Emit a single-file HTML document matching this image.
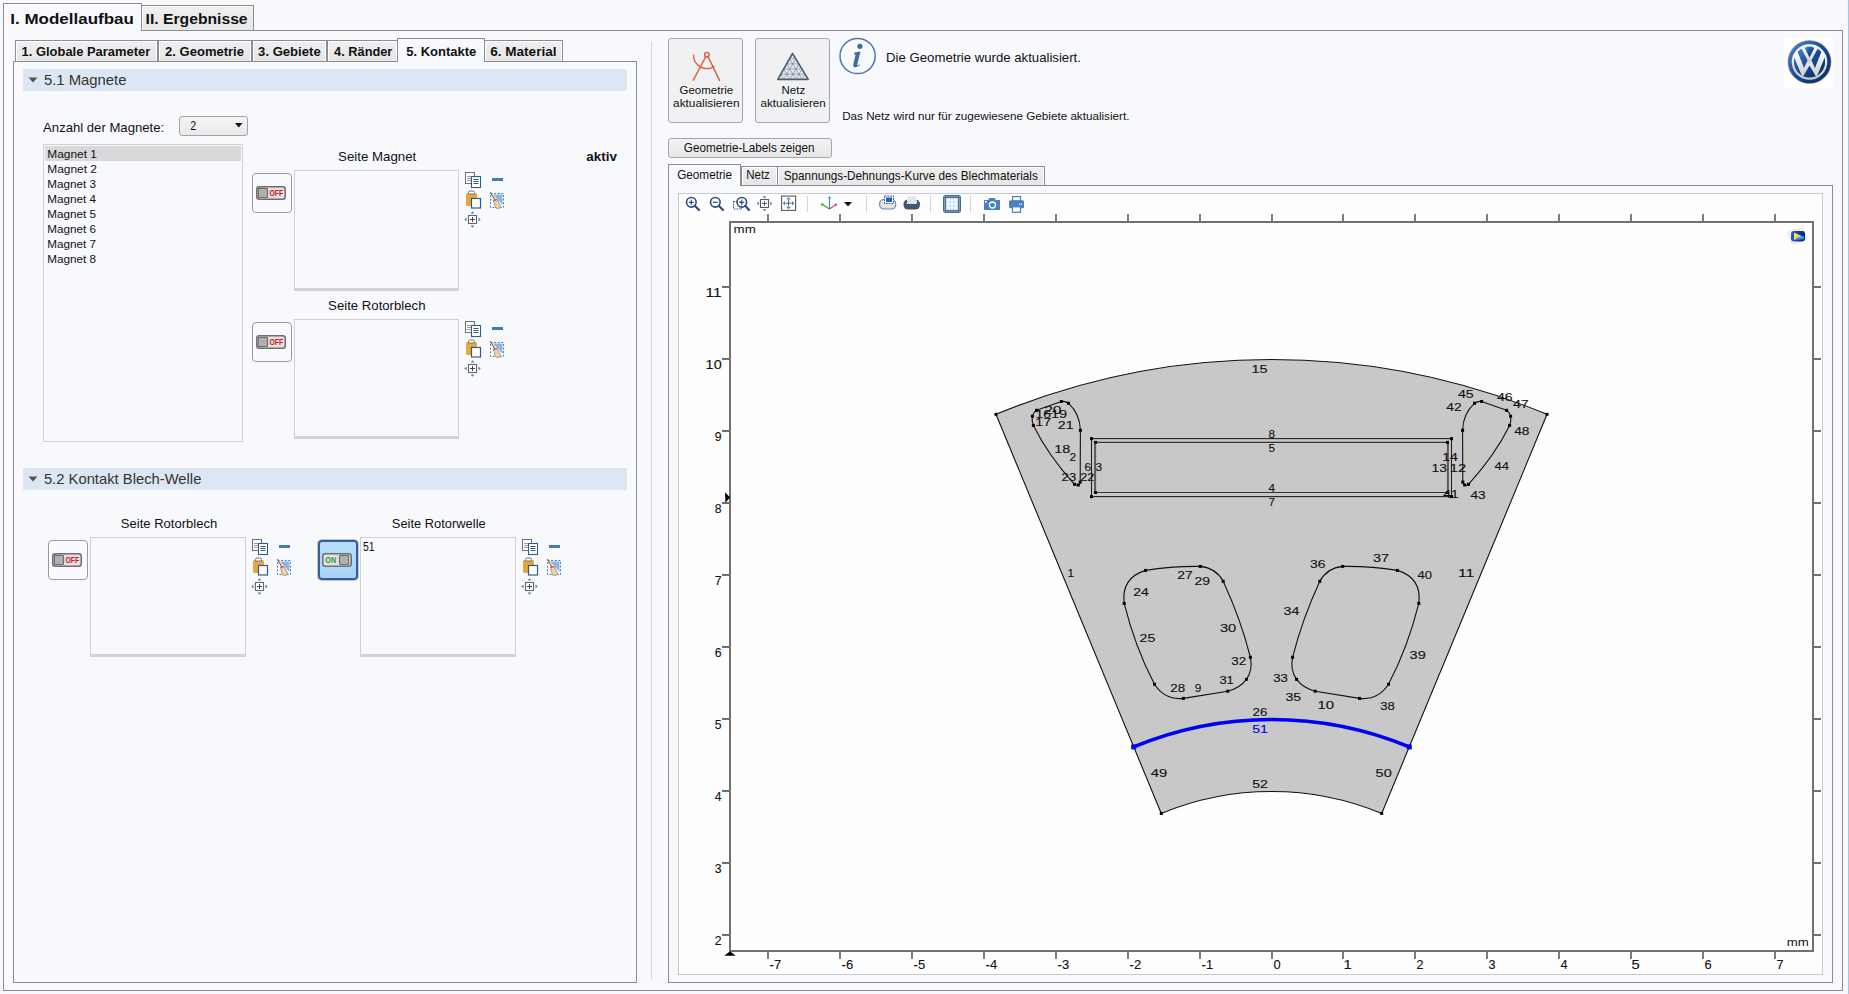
<!DOCTYPE html>
<html><head><meta charset="utf-8"><style>
html,body{margin:0;padding:0;}
body{width:1849px;height:994px;position:relative;overflow:hidden;background:#f8f9fd;font-family:"Liberation Sans",sans-serif;color:#111;}
body>div,body>svg{position:absolute;}
</style></head><body>
<div style="left:3px;top:30px;width:1840px;height:961px;border:1px solid #8b8d92;box-sizing:border-box;"></div><div style="left:1848px;top:0px;width:1px;height:994px;background:#9cc7f2;"></div><div style="left:141px;top:5px;width:113px;height:25px;border:1px solid #8b8d92;border-bottom:none;background:linear-gradient(#f0f0f1,#e7e7e8);box-shadow:inset 1px 1px 0 #fff;box-sizing:border-box;"></div><div style="left:3px;top:3px;width:139px;height:28px;border:1px solid #8b8d92;border-bottom:none;background:#f8f9fd;box-sizing:border-box;"></div><div style="left:13px;top:61px;width:624px;height:922px;border:1px solid #8b8d92;box-sizing:border-box;"></div><div style="left:15px;top:40px;width:143px;height:22px;border:1px solid #8b8d92;background:linear-gradient(#efeff0,#e6e6e7);box-shadow:inset 1px 1px 0 #fff,inset -1px 0 0 #fff;box-sizing:border-box;"></div><div style="left:158px;top:40px;width:94px;height:22px;border:1px solid #8b8d92;background:linear-gradient(#efeff0,#e6e6e7);box-shadow:inset 1px 1px 0 #fff,inset -1px 0 0 #fff;box-sizing:border-box;"></div><div style="left:252px;top:40px;width:75px;height:22px;border:1px solid #8b8d92;background:linear-gradient(#efeff0,#e6e6e7);box-shadow:inset 1px 1px 0 #fff,inset -1px 0 0 #fff;box-sizing:border-box;"></div><div style="left:327px;top:40px;width:71px;height:22px;border:1px solid #8b8d92;background:linear-gradient(#efeff0,#e6e6e7);box-shadow:inset 1px 1px 0 #fff,inset -1px 0 0 #fff;box-sizing:border-box;"></div><div style="left:484px;top:40px;width:79px;height:22px;border:1px solid #8b8d92;background:linear-gradient(#efeff0,#e6e6e7);box-shadow:inset 1px 1px 0 #fff,inset -1px 0 0 #fff;box-sizing:border-box;"></div><div style="left:397px;top:38px;width:88px;height:24px;border:1px solid #8b8d92;border-bottom:none;background:#f8f9fd;box-sizing:border-box;"></div><div style="left:651px;top:42px;width:1px;height:937px;background:#d6d7da;"></div><div style="left:23px;top:69px;width:604px;height:22px;background:#dde7f3;"></div><svg style="position:absolute;left:28px;top:77px;" width="10" height="6" viewBox="0 0 10 6"><path d="M0.5 0.5H9.5L5 5.5Z" fill="#555"/></svg><div style="left:23px;top:468px;width:604px;height:22px;background:#dde7f3;"></div><svg style="position:absolute;left:28px;top:476px;" width="10" height="6" viewBox="0 0 10 6"><path d="M0.5 0.5H9.5L5 5.5Z" fill="#555"/></svg><div style="left:179px;top:116px;width:69px;height:20px;border:1px solid #a3a3a3;border-radius:3px;background:linear-gradient(#f4f4f4,#e9e9ea);box-sizing:border-box;"></div><svg style="position:absolute;left:235px;top:123px;" width="8" height="5" viewBox="0 0 8 5"><path d="M0 0H7.5L3.75 4.5Z" fill="#111"/></svg><div style="left:43px;top:144px;width:200px;height:298px;border:1px solid #cfd0d2;box-sizing:border-box;"></div><div style="left:45px;top:146px;width:196px;height:15px;background:#d9d9db;"></div><div style="left:294px;top:170px;width:165px;height:121px;border:1px solid #cfd0d2;box-sizing:border-box;"></div><div style="left:294px;top:288px;width:165px;height:3px;background:#d3d3d5;"></div><div style="left:294px;top:319px;width:165px;height:120px;border:1px solid #cfd0d2;box-sizing:border-box;"></div><div style="left:294px;top:436px;width:165px;height:3px;background:#d3d3d5;"></div><div style="left:90px;top:537px;width:156px;height:120px;border:1px solid #cfd0d2;box-sizing:border-box;"></div><div style="left:90px;top:654px;width:156px;height:3px;background:#d3d3d5;"></div><div style="left:360px;top:537px;width:156px;height:120px;border:1px solid #cfd0d2;box-sizing:border-box;"></div><div style="left:360px;top:654px;width:156px;height:3px;background:#d3d3d5;"></div><div style="left:252px;top:173px;width:40px;height:40px;border:1px solid #9a9a9a;border-radius:4px;background:#f9fafe;box-sizing:border-box;"></div><svg style="position:absolute;left:256px;top:186px;" width="31" height="15" viewBox="0 0 31 15"><rect x="0.75" y="0.75" width="28.5" height="12.5" rx="2.5" fill="#e2e2e2" stroke="#6e6e6e" stroke-width="1.5"/><rect x="2.3" y="2.3" width="9.2" height="9.2" rx="1" fill="#b0b0b0" stroke="#6e6e6e" stroke-width="1.2"/><text x="13.4" y="10.3" font-size="8.5" font-weight="bold" fill="#d4161e" font-family="Liberation Sans" textLength="13.8" lengthAdjust="spacingAndGlyphs">OFF</text></svg><div style="left:252px;top:322px;width:40px;height:40px;border:1px solid #9a9a9a;border-radius:4px;background:#f9fafe;box-sizing:border-box;"></div><svg style="position:absolute;left:256px;top:335px;" width="31" height="15" viewBox="0 0 31 15"><rect x="0.75" y="0.75" width="28.5" height="12.5" rx="2.5" fill="#e2e2e2" stroke="#6e6e6e" stroke-width="1.5"/><rect x="2.3" y="2.3" width="9.2" height="9.2" rx="1" fill="#b0b0b0" stroke="#6e6e6e" stroke-width="1.2"/><text x="13.4" y="10.3" font-size="8.5" font-weight="bold" fill="#d4161e" font-family="Liberation Sans" textLength="13.8" lengthAdjust="spacingAndGlyphs">OFF</text></svg><div style="left:48px;top:540px;width:40px;height:40px;border:1px solid #9a9a9a;border-radius:4px;background:#f9fafe;box-sizing:border-box;"></div><svg style="position:absolute;left:52px;top:553px;" width="31" height="15" viewBox="0 0 31 15"><rect x="0.75" y="0.75" width="28.5" height="12.5" rx="2.5" fill="#e2e2e2" stroke="#6e6e6e" stroke-width="1.5"/><rect x="2.3" y="2.3" width="9.2" height="9.2" rx="1" fill="#b0b0b0" stroke="#6e6e6e" stroke-width="1.2"/><text x="13.4" y="10.3" font-size="8.5" font-weight="bold" fill="#d4161e" font-family="Liberation Sans" textLength="13.8" lengthAdjust="spacingAndGlyphs">OFF</text></svg><div style="left:318px;top:540px;width:40px;height:40px;border:2px solid #2d5ea6;border-radius:4px;background:linear-gradient(#b9defa,#a6d3f6);box-shadow:0 0 0 1px #c8c4c0;box-sizing:border-box;"></div><svg style="position:absolute;left:322px;top:553px;" width="31" height="15" viewBox="0 0 31 15"><rect x="0.75" y="0.75" width="28.5" height="12.5" rx="2.5" fill="#e2e2e2" stroke="#6e6e6e" stroke-width="1.5"/><rect x="17.5" y="2.3" width="9.2" height="9.2" rx="1" fill="#b0b0b0" stroke="#6e6e6e" stroke-width="1.2"/><text x="3.3" y="10.3" font-size="8.5" font-weight="bold" fill="#1a9a3a" font-family="Liberation Sans" textLength="10.8" lengthAdjust="spacingAndGlyphs">ON</text></svg><svg style="position:absolute;left:464px;top:172px;" width="44" height="56" viewBox="0 0 44 56"><rect x="1.5" y="0.5" width="9" height="11" fill="#fff" stroke="#707070"/><path d="M3 4.5H7M3 6.5H7M3 8.5H7" stroke="#a0a0a0"/><rect x="7.5" y="4.5" width="9" height="11" fill="#fff" stroke="#2f5a8e" stroke-width="1.1"/><path d="M9.5 7.5H14.5M9.5 9.5H14.5M9.5 11.5H14.5" stroke="#2f5a8e"/><rect x="28" y="6" width="11" height="3" fill="#4677b6"/><rect x="2" y="21" width="11" height="13" rx="1.5" fill="#e3a93c"/><path d="M4.5 22V20.5Q4.5 19 6 19H9Q10.5 19 10.5 20.5V22Z" fill="#fff" stroke="#6b6b6b" stroke-width="0.9"/><rect x="7.5" y="26.5" width="9" height="9.5" fill="#fff" stroke="#2f5a8e" stroke-width="1.2"/><rect x="26.5" y="21.5" width="13" height="14" fill="none" stroke="#4a80c0" stroke-dasharray="2,1.6"/><path d="M29 22.5L38.5 22.5L38.5 33Z" fill="#8db3de"/><path d="M26.3 20L31.5 29" stroke="#8b6a48" stroke-width="1.3"/><path d="M29.5 28.5L33 27.5L37 35.5Q34 37 31.5 36Z" fill="#ead3ae" stroke="#9a7850" stroke-width="0.7"/><path d="M29.5 28.5L33 27.5" stroke="#d04040" stroke-width="1"/><rect x="4.5" y="43.5" width="8" height="8" fill="#fff" stroke="#666" stroke-width="1.1"/><path d="M6 47.5H11M8.5 45V50" stroke="#444"/><path d="M8.5 39.2L6.6 41.4H10.4Z M8.5 55.8L6.6 53.6H10.4Z M0.3 47.5L2.5 45.6V49.4Z M16.7 47.5L14.5 45.6V49.4Z" fill="#4a80c0"/></svg><svg style="position:absolute;left:464px;top:321px;" width="44" height="56" viewBox="0 0 44 56"><rect x="1.5" y="0.5" width="9" height="11" fill="#fff" stroke="#707070"/><path d="M3 4.5H7M3 6.5H7M3 8.5H7" stroke="#a0a0a0"/><rect x="7.5" y="4.5" width="9" height="11" fill="#fff" stroke="#2f5a8e" stroke-width="1.1"/><path d="M9.5 7.5H14.5M9.5 9.5H14.5M9.5 11.5H14.5" stroke="#2f5a8e"/><rect x="28" y="6" width="11" height="3" fill="#4677b6"/><rect x="2" y="21" width="11" height="13" rx="1.5" fill="#e3a93c"/><path d="M4.5 22V20.5Q4.5 19 6 19H9Q10.5 19 10.5 20.5V22Z" fill="#fff" stroke="#6b6b6b" stroke-width="0.9"/><rect x="7.5" y="26.5" width="9" height="9.5" fill="#fff" stroke="#2f5a8e" stroke-width="1.2"/><rect x="26.5" y="21.5" width="13" height="14" fill="none" stroke="#4a80c0" stroke-dasharray="2,1.6"/><path d="M29 22.5L38.5 22.5L38.5 33Z" fill="#8db3de"/><path d="M26.3 20L31.5 29" stroke="#8b6a48" stroke-width="1.3"/><path d="M29.5 28.5L33 27.5L37 35.5Q34 37 31.5 36Z" fill="#ead3ae" stroke="#9a7850" stroke-width="0.7"/><path d="M29.5 28.5L33 27.5" stroke="#d04040" stroke-width="1"/><rect x="4.5" y="43.5" width="8" height="8" fill="#fff" stroke="#666" stroke-width="1.1"/><path d="M6 47.5H11M8.5 45V50" stroke="#444"/><path d="M8.5 39.2L6.6 41.4H10.4Z M8.5 55.8L6.6 53.6H10.4Z M0.3 47.5L2.5 45.6V49.4Z M16.7 47.5L14.5 45.6V49.4Z" fill="#4a80c0"/></svg><svg style="position:absolute;left:251px;top:539px;" width="44" height="56" viewBox="0 0 44 56"><rect x="1.5" y="0.5" width="9" height="11" fill="#fff" stroke="#707070"/><path d="M3 4.5H7M3 6.5H7M3 8.5H7" stroke="#a0a0a0"/><rect x="7.5" y="4.5" width="9" height="11" fill="#fff" stroke="#2f5a8e" stroke-width="1.1"/><path d="M9.5 7.5H14.5M9.5 9.5H14.5M9.5 11.5H14.5" stroke="#2f5a8e"/><rect x="28" y="6" width="11" height="3" fill="#4677b6"/><rect x="2" y="21" width="11" height="13" rx="1.5" fill="#e3a93c"/><path d="M4.5 22V20.5Q4.5 19 6 19H9Q10.5 19 10.5 20.5V22Z" fill="#fff" stroke="#6b6b6b" stroke-width="0.9"/><rect x="7.5" y="26.5" width="9" height="9.5" fill="#fff" stroke="#2f5a8e" stroke-width="1.2"/><rect x="26.5" y="21.5" width="13" height="14" fill="none" stroke="#4a80c0" stroke-dasharray="2,1.6"/><path d="M29 22.5L38.5 22.5L38.5 33Z" fill="#8db3de"/><path d="M26.3 20L31.5 29" stroke="#8b6a48" stroke-width="1.3"/><path d="M29.5 28.5L33 27.5L37 35.5Q34 37 31.5 36Z" fill="#ead3ae" stroke="#9a7850" stroke-width="0.7"/><path d="M29.5 28.5L33 27.5" stroke="#d04040" stroke-width="1"/><rect x="4.5" y="43.5" width="8" height="8" fill="#fff" stroke="#666" stroke-width="1.1"/><path d="M6 47.5H11M8.5 45V50" stroke="#444"/><path d="M8.5 39.2L6.6 41.4H10.4Z M8.5 55.8L6.6 53.6H10.4Z M0.3 47.5L2.5 45.6V49.4Z M16.7 47.5L14.5 45.6V49.4Z" fill="#4a80c0"/></svg><svg style="position:absolute;left:521px;top:539px;" width="44" height="56" viewBox="0 0 44 56"><rect x="1.5" y="0.5" width="9" height="11" fill="#fff" stroke="#707070"/><path d="M3 4.5H7M3 6.5H7M3 8.5H7" stroke="#a0a0a0"/><rect x="7.5" y="4.5" width="9" height="11" fill="#fff" stroke="#2f5a8e" stroke-width="1.1"/><path d="M9.5 7.5H14.5M9.5 9.5H14.5M9.5 11.5H14.5" stroke="#2f5a8e"/><rect x="28" y="6" width="11" height="3" fill="#4677b6"/><rect x="2" y="21" width="11" height="13" rx="1.5" fill="#e3a93c"/><path d="M4.5 22V20.5Q4.5 19 6 19H9Q10.5 19 10.5 20.5V22Z" fill="#fff" stroke="#6b6b6b" stroke-width="0.9"/><rect x="7.5" y="26.5" width="9" height="9.5" fill="#fff" stroke="#2f5a8e" stroke-width="1.2"/><rect x="26.5" y="21.5" width="13" height="14" fill="none" stroke="#4a80c0" stroke-dasharray="2,1.6"/><path d="M29 22.5L38.5 22.5L38.5 33Z" fill="#8db3de"/><path d="M26.3 20L31.5 29" stroke="#8b6a48" stroke-width="1.3"/><path d="M29.5 28.5L33 27.5L37 35.5Q34 37 31.5 36Z" fill="#ead3ae" stroke="#9a7850" stroke-width="0.7"/><path d="M29.5 28.5L33 27.5" stroke="#d04040" stroke-width="1"/><rect x="4.5" y="43.5" width="8" height="8" fill="#fff" stroke="#666" stroke-width="1.1"/><path d="M6 47.5H11M8.5 45V50" stroke="#444"/><path d="M8.5 39.2L6.6 41.4H10.4Z M8.5 55.8L6.6 53.6H10.4Z M0.3 47.5L2.5 45.6V49.4Z M16.7 47.5L14.5 45.6V49.4Z" fill="#4a80c0"/></svg><div style="left:668px;top:38px;width:75px;height:85px;border:1px solid #a6a6a8;border-radius:3px;background:#f0f1f3;box-sizing:border-box;"></div><div style="left:755px;top:38px;width:75px;height:85px;border:1px solid #a6a6a8;border-radius:3px;background:#f0f1f3;box-sizing:border-box;"></div><svg style="position:absolute;left:685px;top:45px;" width="40" height="40" viewBox="0 0 40 40"><g fill="none" stroke="#e05a36" stroke-width="1.4" stroke-linecap="round"><circle cx="21.9" cy="9.7" r="2.3"/><path d="M20.6 12L8.3 35.2M23.2 12L34.5 35.4"/><path d="M8.5 10.2A13.5 13.5 0 0 0 29 21.5"/></g></svg><svg style="position:absolute;left:772px;top:45px;" width="42" height="42" viewBox="0 0 42 42"><g stroke="#4b5b70" fill="none"><path d="M20.5 8.5L36.2 34.4H5.8Z" fill="#e6e8eb" stroke-width="1.6" stroke-linejoin="round"/><path d="M17.56 13.68H23.64" stroke-width="0.6" stroke="#6d7b8e"/><path d="M11.88 34.4L8.74 29.22" stroke-width="0.6" stroke="#6d7b8e"/><path d="M11.88 34.4L23.64 13.68" stroke-width="0.6" stroke="#6d7b8e"/><path d="M14.62 18.86H26.78" stroke-width="0.6" stroke="#6d7b8e"/><path d="M17.96 34.4L11.68 24.04" stroke-width="0.6" stroke="#6d7b8e"/><path d="M17.96 34.4L26.78 18.86" stroke-width="0.6" stroke="#6d7b8e"/><path d="M11.68 24.04H29.92" stroke-width="0.6" stroke="#6d7b8e"/><path d="M24.04 34.4L14.62 18.86" stroke-width="0.6" stroke="#6d7b8e"/><path d="M24.04 34.4L29.92 24.04" stroke-width="0.6" stroke="#6d7b8e"/><path d="M8.74 29.22H33.06" stroke-width="0.6" stroke="#6d7b8e"/><path d="M30.12 34.4L17.56 13.68" stroke-width="0.6" stroke="#6d7b8e"/><path d="M30.12 34.4L33.06 29.22" stroke-width="0.6" stroke="#6d7b8e"/></g></svg><svg style="position:absolute;left:834px;top:34px;" width="46" height="46" viewBox="0 0 46 46"><circle cx="23.6" cy="22" r="17.6" fill="none" stroke="#4d78ad" stroke-width="1.5"/><circle cx="25.9" cy="12.3" r="2.6" fill="#3f6aa3"/><path d="M20.5 18.6L26.5 17.6L23.2 30.5Q22.8 32 24.5 31L25.8 30.2L25.5 31.5Q22.5 33.6 20.2 33.2Q18.6 32.8 19.3 30.2L21.6 20.8L20.3 20.6Z" fill="#3f6aa3"/></svg><div style="left:668px;top:138px;width:164px;height:20px;border:1px solid #a6a6a8;border-radius:3px;background:linear-gradient(#f3f3f4,#e7e7e9);box-sizing:border-box;"></div><svg style="position:absolute;left:1784px;top:38px;" width="49" height="50" viewBox="0 0 49 50"><rect width="49" height="50" fill="#fff"/><defs><linearGradient id="vwb" x1="0" y1="0" x2="1" y2="1"><stop offset="0" stop-color="#4f8bd0"/><stop offset="0.5" stop-color="#174a94"/><stop offset="1" stop-color="#08275e"/></linearGradient><linearGradient id="vws" x1="0" y1="0" x2="0" y2="1"><stop offset="0" stop-color="#ffffff"/><stop offset="1" stop-color="#c9c9c9"/></linearGradient></defs><circle cx="25.5" cy="24" r="22" fill="#b8b0a8"/><circle cx="25.5" cy="24" r="21.3" fill="url(#vwb)"/><circle cx="25.5" cy="24" r="17.8" fill="url(#vws)"/><circle cx="25.5" cy="24" r="15.6" fill="url(#vwb)"/><path d="M9.5 17.5L13.5 13.5L20 30L25.5 18.5L31 30L37.5 13.5L41.5 17.5L32.5 39.5L25.5 27.5L18.5 39.5Z" fill="url(#vws)"/><path d="M16.5 9L21.5 7.2L25.5 15.5L29.5 7.2L34.5 9L25.5 26Z" fill="url(#vws)"/><path d="M20.5 9.6L30.5 9.6L25.5 19.6Z" fill="url(#vwb)"/></svg><div style="left:668px;top:185px;width:1165px;height:798px;border:1px solid #8b8d92;box-sizing:border-box;"></div><div style="left:741px;top:166px;width:37px;height:20px;border:1px solid #8b8d92;background:linear-gradient(#efeff0,#e6e6e7);box-shadow:inset 1px 1px 0 #fff,inset -1px 0 0 #fff;box-sizing:border-box;"></div><div style="left:777px;top:166px;width:268px;height:20px;border:1px solid #8b8d92;background:linear-gradient(#efeff0,#e6e6e7);box-shadow:inset 1px 1px 0 #fff,inset -1px 0 0 #fff;box-sizing:border-box;"></div><div style="left:668px;top:164px;width:73px;height:22px;border:1px solid #8b8d92;border-bottom:none;background:#f8f9fd;box-sizing:border-box;"></div><div style="left:678px;top:193px;width:1145px;height:782px;border:1px solid #c9cacd;background:#fefefe;box-sizing:border-box;"></div><svg style="position:absolute;left:685px;top:196px;" width="16" height="16" viewBox="0 0 16 16"><circle cx="6.3" cy="6.3" r="4.8" fill="none" stroke="#2b4f7e" stroke-width="1.6"/><path d="M9.8 9.8L14 14" stroke="#2b4f7e" stroke-width="2.3" stroke-linecap="round"/><path d="M3.8 6.3H8.8M6.3 3.8V8.8" stroke="#2b4f7e" stroke-width="1.2"/></svg><svg style="position:absolute;left:709px;top:196px;" width="16" height="16" viewBox="0 0 16 16"><circle cx="6.3" cy="6.3" r="4.8" fill="none" stroke="#2b4f7e" stroke-width="1.6"/><path d="M9.8 9.8L14 14" stroke="#2b4f7e" stroke-width="2.3" stroke-linecap="round"/><path d="M3.8 6.3H8.8" stroke="#2b4f7e" stroke-width="1.2"/></svg><svg style="position:absolute;left:732px;top:196px;" width="18" height="16" viewBox="0 0 18 16"><rect x="1.5" y="5.5" width="8" height="7.5" fill="none" stroke="#2b4f7e" stroke-dasharray="1.6,1.1"/><circle cx="9.8" cy="6.3" r="4.8" fill="#fff" fill-opacity="0.6" stroke="#2b4f7e" stroke-width="1.6"/><path d="M13.3 9.8L17 14" stroke="#2b4f7e" stroke-width="2.3" stroke-linecap="round"/><path d="M7.3 6.3H12.3M9.8 3.8V8.8" stroke="#2b4f7e" stroke-width="1.2"/></svg><svg style="position:absolute;left:756px;top:195px;" width="17" height="17" viewBox="0 0 17 17"><rect x="4.5" y="4.5" width="8" height="8" fill="#fff" stroke="#5a5a5a" stroke-width="1.1"/><path d="M6 8.5H11M8.5 6V11" stroke="#505050" stroke-width="0.9"/><path d="M8.5 0.6L6.6 2.8H10.4Z M8.5 16.4L6.6 14.2H10.4Z M0.6 8.5L2.8 6.6V10.4Z M16.4 8.5L14.2 6.6V10.4Z" fill="#4a80c0"/></svg><svg style="position:absolute;left:781px;top:195px;" width="16" height="17" viewBox="0 0 16 17"><rect x="0.6" y="1.1" width="14" height="14.3" fill="#fff" stroke="#5a5a5a" stroke-width="1.1"/><path d="M4.5 8.2H10.7M7.6 5.2V11.2" stroke="#505050" stroke-width="0.9"/><path d="M7.6 2.2L5.3 4.6H9.9Z M7.6 14.2L5.3 11.8H9.9Z M1.8 8.2L4.2 5.9V10.5Z M13.4 8.2L11 5.9V10.5Z" fill="#4a80c0"/></svg><div style="left:807px;top:196px;width:1px;height:16px;background:#d4d4d4;"></div><svg style="position:absolute;left:820px;top:196px;" width="18" height="15" viewBox="0 0 18 15"><path d="M9.5 13V1.5" stroke="#4a80c0" stroke-width="1.1"/><path d="M9.5 0L7.8 2.6H11.2Z" fill="#4a80c0"/><path d="M9.5 13L2.5 8.5" stroke="#3aa03a" stroke-width="1.1"/><path d="M0.8 7L1.6 10.3L4 8Z" fill="#3aa03a"/><path d="M9.5 13L15.8 8.6" stroke="#e0305a" stroke-width="1.1"/><path d="M17.5 7.5L14.2 7.9L16 10.5Z" fill="#e0305a"/></svg><svg style="position:absolute;left:844px;top:202px;" width="8" height="5" viewBox="0 0 8 5"><path d="M0 0H8L4 4.5Z" fill="#111"/></svg><div style="left:866px;top:196px;width:1px;height:16px;background:#d4d4d4;"></div><svg style="position:absolute;left:879px;top:195px;" width="18" height="15" viewBox="0 0 18 15"><rect x="0.7" y="4.5" width="16" height="9.5" rx="4" fill="#e3e3e3" stroke="#6a85a8" stroke-width="1.1"/><rect x="5.5" y="1" width="9" height="7.5" fill="#fff" stroke="#2b4f7e" stroke-dasharray="1.8,1"/><rect x="7" y="2.5" width="6" height="4.5" fill="#1f5fbf"/></svg><svg style="position:absolute;left:903px;top:195px;" width="18" height="15" viewBox="0 0 18 15"><rect x="0.5" y="4.5" width="16.5" height="10" rx="4.5" fill="#3f5878"/><rect x="4.5" y="1" width="9" height="7.5" fill="#e4e4e4" stroke="#fff" stroke-width="1.1" stroke-dasharray="1.8,1"/></svg><div style="left:930px;top:196px;width:1px;height:16px;background:#d4d4d4;"></div><svg style="position:absolute;left:943px;top:195px;" width="18" height="18" viewBox="0 0 18 18"><rect x="0.7" y="0.7" width="16.6" height="16.6" rx="2" fill="#bcd8f8" stroke="#3a6db0" stroke-width="1.4"/><rect x="2.3" y="2.3" width="13.4" height="13.4" fill="#c9e0fb" stroke="#555" stroke-width="1"/><g fill="#fff"><rect x="4.2" y="4.2" width="2.3" height="2.3"/><rect x="7.85" y="4.2" width="2.3" height="2.3"/><rect x="11.5" y="4.2" width="2.3" height="2.3"/><rect x="4.2" y="7.85" width="2.3" height="2.3"/><rect x="7.85" y="7.85" width="2.3" height="2.3"/><rect x="11.5" y="7.85" width="2.3" height="2.3"/><rect x="4.2" y="11.5" width="2.3" height="2.3"/><rect x="7.85" y="11.5" width="2.3" height="2.3"/><rect x="11.5" y="11.5" width="2.3" height="2.3"/></g></svg><div style="left:970px;top:196px;width:1px;height:16px;background:#d4d4d4;"></div><svg style="position:absolute;left:983px;top:197px;" width="18" height="14" viewBox="0 0 18 14"><path d="M1 3H5L6.5 1H11.5L13 3H17V13H1Z" fill="#4a80c0"/><circle cx="9.5" cy="8" r="3" fill="none" stroke="#fff" stroke-width="1.3"/><rect x="2" y="4" width="1.6" height="1.6" fill="#fff"/></svg><svg style="position:absolute;left:1009px;top:196px;" width="15" height="17" viewBox="0 0 15 17"><rect x="3.5" y="0.6" width="8" height="4.5" fill="#fff" stroke="#4a80c0" stroke-width="1.2"/><rect x="0" y="4.3" width="15" height="8" rx="1.5" fill="#4a80c0"/><rect x="3.5" y="10.8" width="8" height="5.5" fill="#fff" stroke="#4a80c0" stroke-width="1.2"/><rect x="10" y="7.6" width="1.2" height="1.2" fill="#fff"/><rect x="12" y="7.6" width="1.2" height="1.2" fill="#fff"/></svg><svg style="position:absolute;left:0;top:0" width="1849" height="994" viewBox="0 0 1849 994"><path d="M995.97 414.31 A720.00 720.00 0 0 1 1547.03 414.31 L1381.71 813.42 A288.00 288.00 0 0 0 1161.29 813.42 Z" fill="#c8c8c8" stroke="#111" stroke-width="1.1"/><rect x="1091.5" y="438.6" width="360" height="58" fill="none" stroke="#222" stroke-width="1.1"/><path d="M1095.1 442.4H1447.9M1095.1 492.5H1447.9" stroke="#333" stroke-width="1.1"/><path d="M1095.1 442.4V492.5M1447.9 442.4V492.5" stroke="#5a5a5a" stroke-width="2"/><path d="M1145.6 570.4 Q1172 566 1200.3 566.4 Q1216 568 1223.2 581.3 Q1241 620 1250.4 657.3 Q1253 670 1246.4 679.4 Q1240 688 1227.8 691.2 L1183.4 698.4 Q1165 700.5 1154.5 684.3 Q1135 647 1124.2 603.4 Q1121 578 1145.6 570.4 Z" fill="none" stroke="#111" stroke-width="1.1"/><path d="M1145.6 570.4 Q1172 566 1200.3 566.4 Q1216 568 1223.2 581.3 Q1241 620 1250.4 657.3 Q1253 670 1246.4 679.4 Q1240 688 1227.8 691.2 L1183.4 698.4 Q1165 700.5 1154.5 684.3 Q1135 647 1124.2 603.4 Q1121 578 1145.6 570.4 Z" fill="none" stroke="#111" stroke-width="1.1" transform="translate(2543.00,0) scale(-1,1)"/><path d="M1036.5 410.3 L1061.4 401.5 Q1065 400.8 1068.4 403.2 Q1080 414 1080.4 430.3 L1080.2 482.1 Q1079.8 484.8 1078.3 485 Q1076 485.8 1074.5 484.3 Q1048 455 1033.4 425.4 Q1031.5 420.5 1032.4 416.2 Q1033.5 412 1036.5 410.3 Z" fill="none" stroke="#111" stroke-width="1.1"/><path d="M1036.5 410.3 L1061.4 401.5 Q1065 400.8 1068.4 403.2 Q1080 414 1080.4 430.3 L1080.2 482.1 Q1079.8 484.8 1078.3 485 Q1076 485.8 1074.5 484.3 Q1048 455 1033.4 425.4 Q1031.5 420.5 1032.4 416.2 Q1033.5 412 1036.5 410.3 Z" fill="none" stroke="#111" stroke-width="1.1" transform="translate(2543.00,0) scale(-1,1)"/><path d="M1133.73 746.90 A360.00 360.00 0 0 1 1409.27 746.90" fill="none" stroke="#0000f2" stroke-width="3.6"/><rect x="1131.23" y="744.40" width="5" height="5" fill="#0000f2"/><rect x="1406.77" y="744.40" width="5" height="5" fill="#0000f2"/><rect x="1144.10" y="568.90" width="3" height="3" fill="#000"/><rect x="1395.90" y="568.90" width="3" height="3" fill="#000"/><rect x="1198.80" y="564.90" width="3" height="3" fill="#000"/><rect x="1341.20" y="564.90" width="3" height="3" fill="#000"/><rect x="1221.70" y="579.80" width="3" height="3" fill="#000"/><rect x="1318.30" y="579.80" width="3" height="3" fill="#000"/><rect x="1248.90" y="655.80" width="3" height="3" fill="#000"/><rect x="1291.10" y="655.80" width="3" height="3" fill="#000"/><rect x="1244.90" y="677.90" width="3" height="3" fill="#000"/><rect x="1295.10" y="677.90" width="3" height="3" fill="#000"/><rect x="1226.30" y="689.70" width="3" height="3" fill="#000"/><rect x="1313.70" y="689.70" width="3" height="3" fill="#000"/><rect x="1181.90" y="696.90" width="3" height="3" fill="#000"/><rect x="1358.10" y="696.90" width="3" height="3" fill="#000"/><rect x="1153.00" y="682.80" width="3" height="3" fill="#000"/><rect x="1387.00" y="682.80" width="3" height="3" fill="#000"/><rect x="1122.70" y="601.90" width="3" height="3" fill="#000"/><rect x="1417.30" y="601.90" width="3" height="3" fill="#000"/><rect x="1035.00" y="408.80" width="3" height="3" fill="#000"/><rect x="1505.00" y="408.80" width="3" height="3" fill="#000"/><rect x="1059.90" y="400.00" width="3" height="3" fill="#000"/><rect x="1480.10" y="400.00" width="3" height="3" fill="#000"/><rect x="1066.90" y="401.70" width="3" height="3" fill="#000"/><rect x="1473.10" y="401.70" width="3" height="3" fill="#000"/><rect x="1078.90" y="428.80" width="3" height="3" fill="#000"/><rect x="1461.10" y="428.80" width="3" height="3" fill="#000"/><rect x="1078.70" y="480.60" width="3" height="3" fill="#000"/><rect x="1461.30" y="480.60" width="3" height="3" fill="#000"/><rect x="1076.80" y="483.50" width="3" height="3" fill="#000"/><rect x="1463.20" y="483.50" width="3" height="3" fill="#000"/><rect x="1073.00" y="482.80" width="3" height="3" fill="#000"/><rect x="1467.00" y="482.80" width="3" height="3" fill="#000"/><rect x="1031.90" y="423.90" width="3" height="3" fill="#000"/><rect x="1508.10" y="423.90" width="3" height="3" fill="#000"/><rect x="1030.90" y="414.70" width="3" height="3" fill="#000"/><rect x="1509.10" y="414.70" width="3" height="3" fill="#000"/><rect x="1090.00" y="437.10" width="3" height="3" fill="#000"/><rect x="1450.00" y="437.10" width="3" height="3" fill="#000"/><rect x="1090.00" y="495.10" width="3" height="3" fill="#000"/><rect x="1450.00" y="495.10" width="3" height="3" fill="#000"/><rect x="1094.00" y="440.90" width="3" height="3" fill="#000"/><rect x="1446.00" y="440.90" width="3" height="3" fill="#000"/><rect x="1094.00" y="491.00" width="3" height="3" fill="#000"/><rect x="1446.00" y="491.00" width="3" height="3" fill="#000"/><rect x="994.47" y="412.81" width="3" height="3" fill="#000"/><rect x="1545.53" y="412.81" width="3" height="3" fill="#000"/><rect x="1159.79" y="811.92" width="3" height="3" fill="#000"/><rect x="1380.21" y="811.92" width="3" height="3" fill="#000"/><path d="M730 222 H1813 V951 H730 Z" fill="none" stroke="#707070" stroke-width="2"/><path d="M768 214V222M768 951V959M840 214V222M840 951V959M912 214V222M912 951V959M984 214V222M984 951V959M1056 214V222M1056 951V959M1128 214V222M1128 951V959M1200 214V222M1200 951V959M1272 214V222M1272 951V959M1343 214V222M1343 951V959M1415 214V222M1415 951V959M1487 214V222M1487 951V959M1559 214V222M1559 951V959M1631 214V222M1631 951V959M1703 214V222M1703 951V959M1775 214V222M1775 951V959M722 935H730M1813 935H1821M722 863H730M1813 863H1821M722 791H730M1813 791H1821M722 719H730M1813 719H1821M722 647H730M1813 647H1821M722 575H730M1813 575H1821M722 503H730M1813 503H1821M722 431H730M1813 431H1821M722 359H730M1813 359H1821M722 287H730M1813 287H1821" stroke="#707070" stroke-width="1.8"/><path d="M724.2 955.7H735.7L730 951.2Z" fill="#000"/><path d="M725.1 492.2L730.1 497.4L725.4 502.8Z" fill="#000"/></svg><svg style="position:absolute;left:1786px;top:226px;" width="24" height="20" viewBox="0 0 24 20"><path d="M2 6L17 1.5L21 13L6 18Z" fill="#f3f3f3" stroke="#dedede" stroke-width="0.6"/><defs><linearGradient id="sg" x1="0" y1="0" x2="1" y2="0"><stop offset="0" stop-color="#2a5ad8"/><stop offset="1" stop-color="#0a1f8a"/></linearGradient></defs><rect x="5" y="5" width="14" height="10.5" rx="3" fill="url(#sg)"/><path d="M8 6.5L16 10.2L8 14Z" fill="#f5e840"/><path d="M11 11L18 10V13L9 14Z" fill="#4aa8f0" opacity="0.8"/></svg>
<svg style="position:absolute;left:0;top:0" width="1849" height="994" viewBox="0 0 1849 994"><text x="10.30" y="24.0" font-size="14.5" font-weight="bold" fill="#111" font-family="Liberation Sans" textLength="123.53" lengthAdjust="spacingAndGlyphs">I. Modellaufbau</text><text x="145.60" y="23.8" font-size="14.5" font-weight="bold" fill="#111" font-family="Liberation Sans" textLength="102.01" lengthAdjust="spacingAndGlyphs">II. Ergebnisse</text><text x="21.60" y="56.0" font-size="12.9" font-weight="bold" fill="#111" font-family="Liberation Sans" textLength="128.60" lengthAdjust="spacingAndGlyphs">1. Globale Parameter</text><text x="165.10" y="56.0" font-size="12.9" font-weight="bold" fill="#111" font-family="Liberation Sans" textLength="78.89" lengthAdjust="spacingAndGlyphs">2. Geometrie</text><text x="258.10" y="56.0" font-size="12.9" font-weight="bold" fill="#111" font-family="Liberation Sans" textLength="62.59" lengthAdjust="spacingAndGlyphs">3. Gebiete</text><text x="334.10" y="56.0" font-size="12.9" font-weight="bold" fill="#111" font-family="Liberation Sans" textLength="58.23" lengthAdjust="spacingAndGlyphs">4. Ränder</text><text x="406.20" y="56.0" font-size="12.9" font-weight="bold" fill="#111" font-family="Liberation Sans" textLength="70.12" lengthAdjust="spacingAndGlyphs">5. Kontakte</text><text x="490.20" y="56.0" font-size="12.9" font-weight="bold" fill="#111" font-family="Liberation Sans" textLength="66.33" lengthAdjust="spacingAndGlyphs">6. Material</text><text x="43.90" y="85.0" font-size="14.8" font-weight="normal" fill="#333" font-family="Liberation Sans" textLength="82.63" lengthAdjust="spacingAndGlyphs">5.1 Magnete</text><text x="43.90" y="484.3" font-size="14.8" font-weight="normal" fill="#333" font-family="Liberation Sans" textLength="157.50" lengthAdjust="spacingAndGlyphs">5.2 Kontakt Blech-Welle</text><text x="43.10" y="131.5" font-size="11.9" font-weight="normal" fill="#111" font-family="Liberation Sans" textLength="121.00" lengthAdjust="spacingAndGlyphs">Anzahl der Magnete:</text><text x="190.30" y="129.6" font-size="11.9" font-weight="normal" fill="#111" font-family="Liberation Sans" textLength="6.03" lengthAdjust="spacingAndGlyphs">2</text><text x="47.20" y="157.6" font-size="11.7" font-weight="normal" fill="#111" font-family="Liberation Sans" textLength="49.80" lengthAdjust="spacingAndGlyphs">Magnet 1</text><text x="47.20" y="172.6" font-size="11.7" font-weight="normal" fill="#111" font-family="Liberation Sans" textLength="49.80" lengthAdjust="spacingAndGlyphs">Magnet 2</text><text x="47.20" y="187.6" font-size="11.7" font-weight="normal" fill="#111" font-family="Liberation Sans" textLength="48.80" lengthAdjust="spacingAndGlyphs">Magnet 3</text><text x="47.20" y="202.6" font-size="11.7" font-weight="normal" fill="#111" font-family="Liberation Sans" textLength="48.80" lengthAdjust="spacingAndGlyphs">Magnet 4</text><text x="47.20" y="217.6" font-size="11.7" font-weight="normal" fill="#111" font-family="Liberation Sans" textLength="48.80" lengthAdjust="spacingAndGlyphs">Magnet 5</text><text x="47.20" y="232.6" font-size="11.7" font-weight="normal" fill="#111" font-family="Liberation Sans" textLength="48.80" lengthAdjust="spacingAndGlyphs">Magnet 6</text><text x="47.20" y="247.6" font-size="11.7" font-weight="normal" fill="#111" font-family="Liberation Sans" textLength="48.82" lengthAdjust="spacingAndGlyphs">Magnet 7</text><text x="47.20" y="262.6" font-size="11.7" font-weight="normal" fill="#111" font-family="Liberation Sans" textLength="48.80" lengthAdjust="spacingAndGlyphs">Magnet 8</text><text x="338.10" y="161.0" font-size="11.9" font-weight="normal" fill="#111" font-family="Liberation Sans" textLength="78.21" lengthAdjust="spacingAndGlyphs">Seite Magnet</text><text x="586.30" y="161.0" font-size="11.9" font-weight="bold" fill="#111" font-family="Liberation Sans" textLength="30.65" lengthAdjust="spacingAndGlyphs">aktiv</text><text x="328.10" y="309.9" font-size="11.9" font-weight="normal" fill="#111" font-family="Liberation Sans" textLength="97.42" lengthAdjust="spacingAndGlyphs">Seite Rotorblech</text><text x="120.80" y="528.1" font-size="11.9" font-weight="normal" fill="#111" font-family="Liberation Sans" textLength="96.40" lengthAdjust="spacingAndGlyphs">Seite Rotorblech</text><text x="391.80" y="528.1" font-size="11.9" font-weight="normal" fill="#111" font-family="Liberation Sans" textLength="93.90" lengthAdjust="spacingAndGlyphs">Seite Rotorwelle</text><text x="363.00" y="551.4" font-size="11.9" font-weight="normal" fill="#111" font-family="Liberation Sans" textLength="11.56" lengthAdjust="spacingAndGlyphs">51</text><text x="679.50" y="94.0" font-size="10.3" font-weight="normal" fill="#111" font-family="Liberation Sans" textLength="53.69" lengthAdjust="spacingAndGlyphs">Geometrie</text><text x="673.10" y="106.8" font-size="10.3" font-weight="normal" fill="#111" font-family="Liberation Sans" textLength="66.41" lengthAdjust="spacingAndGlyphs">aktualisieren</text><text x="781.50" y="94.0" font-size="10.3" font-weight="normal" fill="#111" font-family="Liberation Sans" textLength="23.79" lengthAdjust="spacingAndGlyphs">Netz</text><text x="760.50" y="106.8" font-size="10.3" font-weight="normal" fill="#111" font-family="Liberation Sans" textLength="65.30" lengthAdjust="spacingAndGlyphs">aktualisieren</text><text x="886.10" y="61.9" font-size="12.2" font-weight="normal" fill="#111" font-family="Liberation Sans" textLength="194.82" lengthAdjust="spacingAndGlyphs">Die Geometrie wurde aktualisiert.</text><text x="842.20" y="119.6" font-size="11.5" font-weight="normal" fill="#111" font-family="Liberation Sans" textLength="287.20" lengthAdjust="spacingAndGlyphs">Das Netz wird nur für zugewiesene Gebiete aktualisiert.</text><text x="683.80" y="151.7" font-size="11.9" font-weight="normal" fill="#111" font-family="Liberation Sans" textLength="130.70" lengthAdjust="spacingAndGlyphs">Geometrie-Labels zeigen</text><text x="677.20" y="179.3" font-size="11.9" font-weight="normal" fill="#111" font-family="Liberation Sans" textLength="54.80" lengthAdjust="spacingAndGlyphs">Geometrie</text><text x="746.20" y="179.3" font-size="11.9" font-weight="normal" fill="#111" font-family="Liberation Sans" textLength="23.66" lengthAdjust="spacingAndGlyphs">Netz</text><text x="783.70" y="179.6" font-size="11.9" font-weight="normal" fill="#111" font-family="Liberation Sans" textLength="254.10" lengthAdjust="spacingAndGlyphs">Spannungs-Dehnungs-Kurve des Blechmaterials</text><text x="769.60" y="968.9" font-size="12.2" font-weight="normal" fill="#111" stroke="#111" stroke-width="0.12" font-family="Liberation Sans" textLength="11.56" lengthAdjust="spacingAndGlyphs">-7</text><text x="841.60" y="968.9" font-size="12.2" font-weight="normal" fill="#111" stroke="#111" stroke-width="0.12" font-family="Liberation Sans" textLength="11.56" lengthAdjust="spacingAndGlyphs">-6</text><text x="913.60" y="968.9" font-size="12.2" font-weight="normal" fill="#111" stroke="#111" stroke-width="0.12" font-family="Liberation Sans" textLength="11.56" lengthAdjust="spacingAndGlyphs">-5</text><text x="985.60" y="968.9" font-size="12.2" font-weight="normal" fill="#111" stroke="#111" stroke-width="0.12" font-family="Liberation Sans" textLength="11.56" lengthAdjust="spacingAndGlyphs">-4</text><text x="1057.60" y="968.9" font-size="12.2" font-weight="normal" fill="#111" stroke="#111" stroke-width="0.12" font-family="Liberation Sans" textLength="11.56" lengthAdjust="spacingAndGlyphs">-3</text><text x="1129.60" y="968.9" font-size="12.2" font-weight="normal" fill="#111" stroke="#111" stroke-width="0.12" font-family="Liberation Sans" textLength="11.56" lengthAdjust="spacingAndGlyphs">-2</text><text x="1201.60" y="968.9" font-size="12.2" font-weight="normal" fill="#111" stroke="#111" stroke-width="0.12" font-family="Liberation Sans" textLength="11.56" lengthAdjust="spacingAndGlyphs">-1</text><text x="1273.60" y="968.9" font-size="12.2" font-weight="normal" fill="#111" stroke="#111" stroke-width="0.12" font-family="Liberation Sans" textLength="7.15" lengthAdjust="spacingAndGlyphs">0</text><text x="1343.60" y="968.9" font-size="12.2" font-weight="normal" fill="#111" stroke="#111" stroke-width="0.12" font-family="Liberation Sans" textLength="8.17" lengthAdjust="spacingAndGlyphs">1</text><text x="1416.60" y="968.9" font-size="12.2" font-weight="normal" fill="#111" stroke="#111" stroke-width="0.12" font-family="Liberation Sans" textLength="7.00" lengthAdjust="spacingAndGlyphs">2</text><text x="1488.60" y="968.9" font-size="12.2" font-weight="normal" fill="#111" stroke="#111" stroke-width="0.12" font-family="Liberation Sans" textLength="7.00" lengthAdjust="spacingAndGlyphs">3</text><text x="1560.60" y="968.9" font-size="12.2" font-weight="normal" fill="#111" stroke="#111" stroke-width="0.12" font-family="Liberation Sans" textLength="7.15" lengthAdjust="spacingAndGlyphs">4</text><text x="1631.60" y="968.9" font-size="12.2" font-weight="normal" fill="#111" stroke="#111" stroke-width="0.12" font-family="Liberation Sans" textLength="8.17" lengthAdjust="spacingAndGlyphs">5</text><text x="1704.60" y="968.9" font-size="12.2" font-weight="normal" fill="#111" stroke="#111" stroke-width="0.12" font-family="Liberation Sans" textLength="7.15" lengthAdjust="spacingAndGlyphs">6</text><text x="1776.60" y="968.9" font-size="12.2" font-weight="normal" fill="#111" stroke="#111" stroke-width="0.12" font-family="Liberation Sans" textLength="7.00" lengthAdjust="spacingAndGlyphs">7</text><text x="721.6" y="945.4" font-size="12.2" fill="#111" stroke="#111" stroke-width="0.12" font-family="Liberation Sans" text-anchor="end">2</text><text x="721.6" y="873.4" font-size="12.2" fill="#111" stroke="#111" stroke-width="0.12" font-family="Liberation Sans" text-anchor="end">3</text><text x="721.6" y="801.4" font-size="12.2" fill="#111" stroke="#111" stroke-width="0.12" font-family="Liberation Sans" text-anchor="end">4</text><text x="721.6" y="729.4" font-size="12.2" fill="#111" stroke="#111" stroke-width="0.12" font-family="Liberation Sans" text-anchor="end">5</text><text x="721.6" y="657.4" font-size="12.2" fill="#111" stroke="#111" stroke-width="0.12" font-family="Liberation Sans" text-anchor="end">6</text><text x="721.6" y="585.4" font-size="12.2" fill="#111" stroke="#111" stroke-width="0.12" font-family="Liberation Sans" text-anchor="end">7</text><text x="721.6" y="513.4" font-size="12.2" fill="#111" stroke="#111" stroke-width="0.12" font-family="Liberation Sans" text-anchor="end">8</text><text x="721.6" y="441.4" font-size="12.2" fill="#111" stroke="#111" stroke-width="0.12" font-family="Liberation Sans" text-anchor="end">9</text><text x="705.60" y="369.4" font-size="12.2" font-weight="normal" fill="#111" stroke="#111" stroke-width="0.12" font-family="Liberation Sans" textLength="16.08" lengthAdjust="spacingAndGlyphs">10</text><text x="705.60" y="297.4" font-size="12.2" font-weight="normal" fill="#111" stroke="#111" stroke-width="0.12" font-family="Liberation Sans" textLength="16.00" lengthAdjust="spacingAndGlyphs">11</text><text x="733.60" y="233.0" font-size="11.2" font-weight="normal" fill="#111" font-family="Liberation Sans" textLength="22.17" lengthAdjust="spacingAndGlyphs">mm</text><text x="1786.80" y="945.7" font-size="11.2" font-weight="normal" fill="#111" font-family="Liberation Sans" textLength="22.05" lengthAdjust="spacingAndGlyphs">mm</text><text x="1251.50" y="372.9" font-size="11.8" font-weight="normal" fill="#111" stroke="#111" stroke-width="0.12" font-family="Liberation Sans" textLength="16.13" lengthAdjust="spacingAndGlyphs">15</text><text x="1457.90" y="397.6" font-size="11.8" font-weight="normal" fill="#111" stroke="#111" stroke-width="0.12" font-family="Liberation Sans" textLength="15.76" lengthAdjust="spacingAndGlyphs">45</text><text x="1496.90" y="401.1" font-size="11.8" font-weight="normal" fill="#111" stroke="#111" stroke-width="0.12" font-family="Liberation Sans" textLength="15.76" lengthAdjust="spacingAndGlyphs">46</text><text x="1512.90" y="408.3" font-size="11.8" font-weight="normal" fill="#111" stroke="#111" stroke-width="0.12" font-family="Liberation Sans" textLength="15.86" lengthAdjust="spacingAndGlyphs">47</text><text x="1446.20" y="411.4" font-size="11.8" font-weight="normal" fill="#111" stroke="#111" stroke-width="0.12" font-family="Liberation Sans" textLength="15.44" lengthAdjust="spacingAndGlyphs">42</text><text x="1514.20" y="434.7" font-size="11.8" font-weight="normal" fill="#111" stroke="#111" stroke-width="0.12" font-family="Liberation Sans" textLength="15.26" lengthAdjust="spacingAndGlyphs">48</text><text x="1271.9" y="438.4" font-size="11.8" fill="#111" stroke="#111" stroke-width="0.12" font-family="Liberation Sans" text-anchor="middle">8</text><text x="1271.9" y="451.9" font-size="11.8" fill="#111" stroke="#111" stroke-width="0.12" font-family="Liberation Sans" text-anchor="middle">5</text><text x="1442.20" y="460.5" font-size="11.8" font-weight="normal" fill="#111" stroke="#111" stroke-width="0.12" font-family="Liberation Sans" textLength="15.79" lengthAdjust="spacingAndGlyphs">14</text><text x="1431.60" y="471.6" font-size="11.8" font-weight="normal" fill="#111" stroke="#111" stroke-width="0.12" font-family="Liberation Sans" textLength="15.44" lengthAdjust="spacingAndGlyphs">13</text><text x="1449.80" y="471.6" font-size="11.8" font-weight="normal" fill="#111" stroke="#111" stroke-width="0.12" font-family="Liberation Sans" textLength="16.37" lengthAdjust="spacingAndGlyphs">12</text><text x="1494.60" y="469.9" font-size="11.8" font-weight="normal" fill="#111" stroke="#111" stroke-width="0.12" font-family="Liberation Sans" textLength="14.41" lengthAdjust="spacingAndGlyphs">44</text><text x="1271.9" y="492.1" font-size="11.8" fill="#111" stroke="#111" stroke-width="0.12" font-family="Liberation Sans" text-anchor="middle">4</text><text x="1271.9" y="505.8" font-size="11.8" fill="#111" stroke="#111" stroke-width="0.12" font-family="Liberation Sans" text-anchor="middle">7</text><text x="1443.30" y="497.6" font-size="11.8" font-weight="normal" fill="#111" stroke="#111" stroke-width="0.12" font-family="Liberation Sans" textLength="15.28" lengthAdjust="spacingAndGlyphs">41</text><text x="1470.50" y="498.9" font-size="11.8" font-weight="normal" fill="#111" stroke="#111" stroke-width="0.12" font-family="Liberation Sans" textLength="15.19" lengthAdjust="spacingAndGlyphs">43</text><text x="1044.20" y="413.6" font-size="11.8" font-weight="normal" fill="#111" stroke="#111" stroke-width="0.12" font-family="Liberation Sans" textLength="17.37" lengthAdjust="spacingAndGlyphs">20</text><text x="1035.50" y="417.9" font-size="11.8" font-weight="normal" fill="#111" stroke="#111" stroke-width="0.12" font-family="Liberation Sans" textLength="15.69" lengthAdjust="spacingAndGlyphs">16</text><text x="1050.90" y="418.0" font-size="11.8" font-weight="normal" fill="#111" stroke="#111" stroke-width="0.12" font-family="Liberation Sans" textLength="16.21" lengthAdjust="spacingAndGlyphs">19</text><text x="1035.30" y="425.8" font-size="11.8" font-weight="normal" fill="#111" stroke="#111" stroke-width="0.12" font-family="Liberation Sans" textLength="15.93" lengthAdjust="spacingAndGlyphs">17</text><text x="1057.80" y="428.6" font-size="11.8" font-weight="normal" fill="#111" stroke="#111" stroke-width="0.12" font-family="Liberation Sans" textLength="15.79" lengthAdjust="spacingAndGlyphs">21</text><text x="1054.20" y="452.6" font-size="11.8" font-weight="normal" fill="#111" stroke="#111" stroke-width="0.12" font-family="Liberation Sans" textLength="16.13" lengthAdjust="spacingAndGlyphs">18</text><text x="1072.7" y="460.7" font-size="11.8" fill="#111" stroke="#111" stroke-width="0.12" font-family="Liberation Sans" text-anchor="middle">2</text><text x="1087.8" y="471.4" font-size="11.8" fill="#111" stroke="#111" stroke-width="0.12" font-family="Liberation Sans" text-anchor="middle">6</text><text x="1098.8" y="471.4" font-size="11.8" fill="#111" stroke="#111" stroke-width="0.12" font-family="Liberation Sans" text-anchor="middle">3</text><text x="1061.60" y="480.5" font-size="11.8" font-weight="normal" fill="#111" stroke="#111" stroke-width="0.12" font-family="Liberation Sans" textLength="14.57" lengthAdjust="spacingAndGlyphs">23</text><text x="1080.30" y="480.5" font-size="11.8" font-weight="normal" fill="#111" stroke="#111" stroke-width="0.12" font-family="Liberation Sans" textLength="14.12" lengthAdjust="spacingAndGlyphs">22</text><text x="1070.8" y="577.1" font-size="11.8" fill="#111" stroke="#111" stroke-width="0.12" font-family="Liberation Sans" text-anchor="middle">1</text><text x="1177.20" y="578.9" font-size="11.8" font-weight="normal" fill="#111" stroke="#111" stroke-width="0.12" font-family="Liberation Sans" textLength="15.46" lengthAdjust="spacingAndGlyphs">27</text><text x="1194.60" y="584.9" font-size="11.8" font-weight="normal" fill="#111" stroke="#111" stroke-width="0.12" font-family="Liberation Sans" textLength="15.52" lengthAdjust="spacingAndGlyphs">29</text><text x="1133.20" y="596.1" font-size="11.8" font-weight="normal" fill="#111" stroke="#111" stroke-width="0.12" font-family="Liberation Sans" textLength="15.52" lengthAdjust="spacingAndGlyphs">24</text><text x="1219.90" y="632.0" font-size="11.8" font-weight="normal" fill="#111" stroke="#111" stroke-width="0.12" font-family="Liberation Sans" textLength="16.28" lengthAdjust="spacingAndGlyphs">30</text><text x="1139.50" y="641.7" font-size="11.8" font-weight="normal" fill="#111" stroke="#111" stroke-width="0.12" font-family="Liberation Sans" textLength="15.76" lengthAdjust="spacingAndGlyphs">25</text><text x="1283.60" y="615.1" font-size="11.8" font-weight="normal" fill="#111" stroke="#111" stroke-width="0.12" font-family="Liberation Sans" textLength="15.76" lengthAdjust="spacingAndGlyphs">34</text><text x="1231.30" y="664.9" font-size="11.8" font-weight="normal" fill="#111" stroke="#111" stroke-width="0.12" font-family="Liberation Sans" textLength="14.93" lengthAdjust="spacingAndGlyphs">32</text><text x="1219.40" y="683.9" font-size="11.8" font-weight="normal" fill="#111" stroke="#111" stroke-width="0.12" font-family="Liberation Sans" textLength="14.45" lengthAdjust="spacingAndGlyphs">31</text><text x="1273.30" y="681.6" font-size="11.8" font-weight="normal" fill="#111" stroke="#111" stroke-width="0.12" font-family="Liberation Sans" textLength="14.64" lengthAdjust="spacingAndGlyphs">33</text><text x="1170.30" y="692.4" font-size="11.8" font-weight="normal" fill="#111" stroke="#111" stroke-width="0.12" font-family="Liberation Sans" textLength="14.93" lengthAdjust="spacingAndGlyphs">28</text><text x="1198.0" y="691.7" font-size="11.8" fill="#111" stroke="#111" stroke-width="0.12" font-family="Liberation Sans" text-anchor="middle">9</text><text x="1285.40" y="700.8" font-size="11.8" font-weight="normal" fill="#111" stroke="#111" stroke-width="0.12" font-family="Liberation Sans" textLength="15.77" lengthAdjust="spacingAndGlyphs">35</text><text x="1252.60" y="715.6" font-size="11.8" font-weight="normal" fill="#111" stroke="#111" stroke-width="0.12" font-family="Liberation Sans" textLength="14.80" lengthAdjust="spacingAndGlyphs">26</text><text x="1309.90" y="567.7" font-size="11.8" font-weight="normal" fill="#111" stroke="#111" stroke-width="0.12" font-family="Liberation Sans" textLength="15.52" lengthAdjust="spacingAndGlyphs">36</text><text x="1372.90" y="562.1" font-size="11.8" font-weight="normal" fill="#111" stroke="#111" stroke-width="0.12" font-family="Liberation Sans" textLength="16.13" lengthAdjust="spacingAndGlyphs">37</text><text x="1417.50" y="578.6" font-size="11.8" font-weight="normal" fill="#111" stroke="#111" stroke-width="0.12" font-family="Liberation Sans" textLength="14.49" lengthAdjust="spacingAndGlyphs">40</text><text x="1457.90" y="577.1" font-size="11.8" font-weight="normal" fill="#111" stroke="#111" stroke-width="0.12" font-family="Liberation Sans" textLength="16.49" lengthAdjust="spacingAndGlyphs">11</text><text x="1409.60" y="658.6" font-size="11.8" font-weight="normal" fill="#111" stroke="#111" stroke-width="0.12" font-family="Liberation Sans" textLength="16.13" lengthAdjust="spacingAndGlyphs">39</text><text x="1317.60" y="708.9" font-size="11.8" font-weight="normal" fill="#111" stroke="#111" stroke-width="0.12" font-family="Liberation Sans" textLength="16.56" lengthAdjust="spacingAndGlyphs">10</text><text x="1380.30" y="709.6" font-size="11.8" font-weight="normal" fill="#111" stroke="#111" stroke-width="0.12" font-family="Liberation Sans" textLength="14.64" lengthAdjust="spacingAndGlyphs">38</text><text x="1150.70" y="776.8" font-size="11.8" font-weight="normal" fill="#111" stroke="#111" stroke-width="0.12" font-family="Liberation Sans" textLength="16.52" lengthAdjust="spacingAndGlyphs">49</text><text x="1375.60" y="776.8" font-size="11.8" font-weight="normal" fill="#111" stroke="#111" stroke-width="0.12" font-family="Liberation Sans" textLength="16.13" lengthAdjust="spacingAndGlyphs">50</text><text x="1252.20" y="787.8" font-size="11.8" font-weight="normal" fill="#111" stroke="#111" stroke-width="0.12" font-family="Liberation Sans" textLength="15.79" lengthAdjust="spacingAndGlyphs">52</text><text x="1252.20" y="733.2" font-size="11.8" font-weight="normal" fill="#0000e0" stroke="#0000e0" stroke-width="0.12" font-family="Liberation Sans" textLength="15.79" lengthAdjust="spacingAndGlyphs">51</text></svg>
</body></html>
